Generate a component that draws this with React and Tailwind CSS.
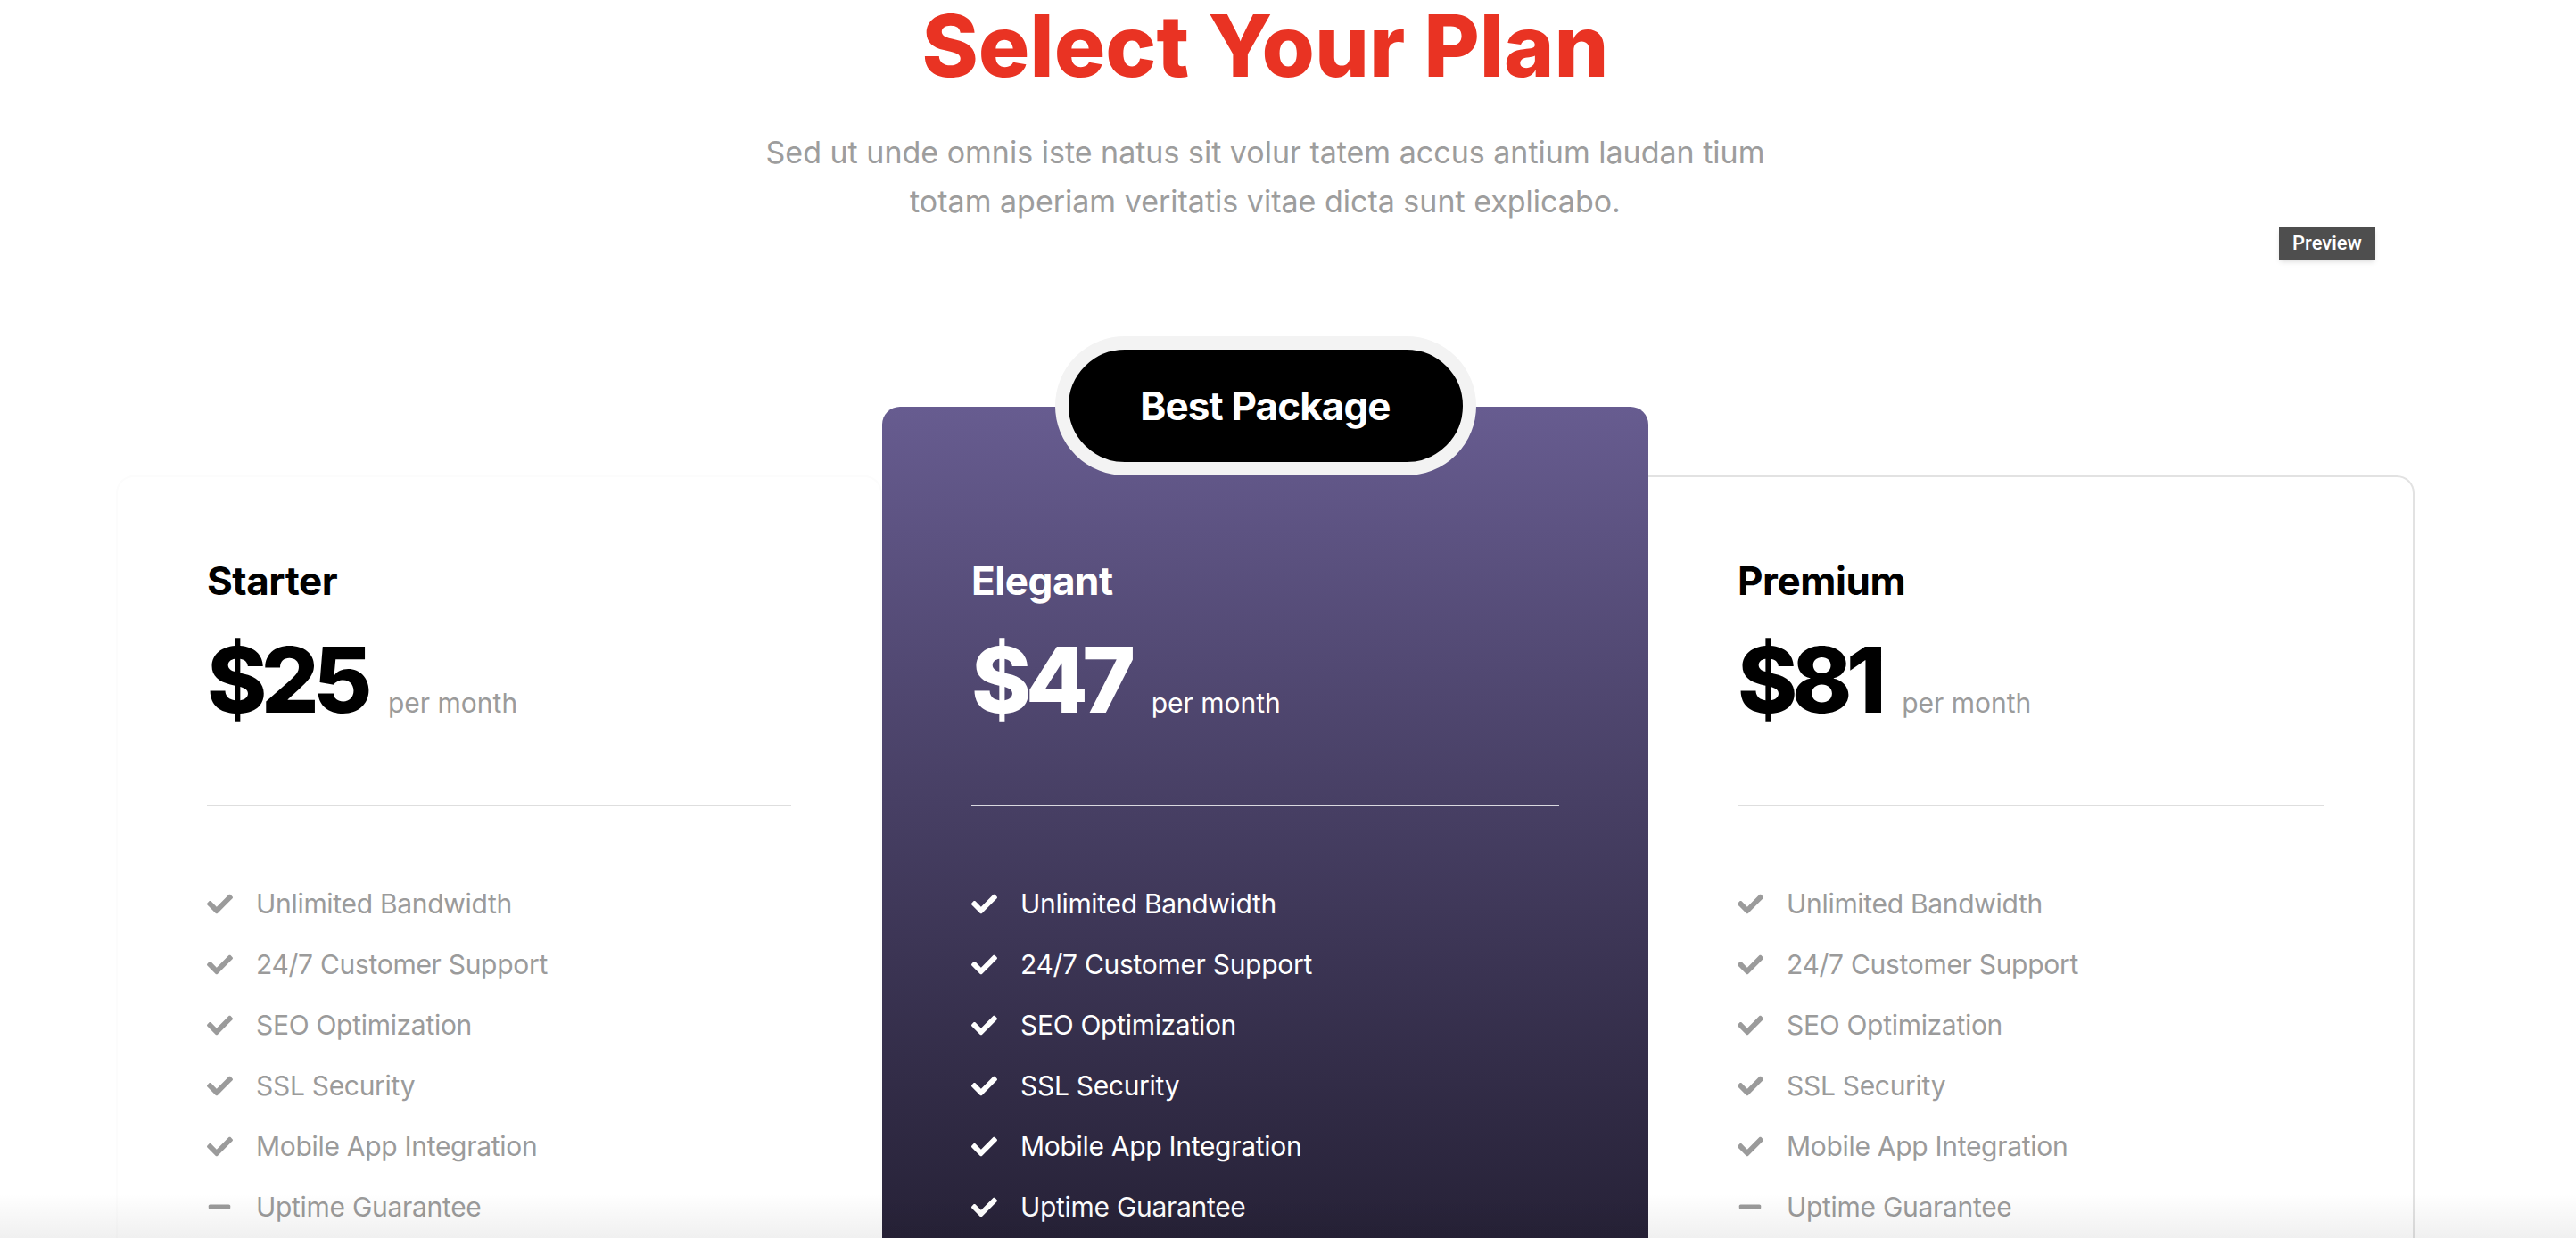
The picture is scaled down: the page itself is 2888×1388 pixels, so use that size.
import React from 'react';
import { FaCheck, FaMinus } from 'react-icons/fa';

const features = [
  'Unlimited Bandwidth',
  '24/7 Customer Support',
  'SEO Optimization',
  'SSL Security',
  'Mobile App Integration',
  'Uptime Guarantee',
];

const plans = [
  { name: 'Starter', price: '$25', uptime: false },
  { name: 'Elegant', price: '$47', uptime: true, featured: true },
  { name: 'Premium', price: '$81', uptime: false },
];

function PlanBody({ plan }) {
  const dark = plan.featured;
  return (
    <div className="flex flex-col">
      <h3 className={`text-[44px] leading-[48px] font-bold tracking-[-0.01em] ${dark ? 'text-white' : 'text-black'}`}>
        {plan.name}
      </h3>
      <div className="flex items-baseline mt-[36px]">
        <span className={`text-[102px] leading-none font-extrabold tracking-[-0.065em] ${dark ? 'text-white' : 'text-black'}`}>
          {plan.price}
        </span>
        <span className={`ml-[24px] text-[30px] ${dark ? 'text-white' : 'text-[#9b9b9b]'}`}>per month</span>
      </div>
      <div className={`mt-[89px] h-[2px] w-full ${dark ? 'bg-white/80' : 'bg-[#dedede]'}`}></div>
      <ul className="mt-[75px] flex flex-col">
        {features.map((f, i) => {
          const on = i < 5 || plan.uptime;
          return (
            <li key={f} className={`flex items-center h-[68px] text-[30px] tracking-[-0.01em] ${dark ? 'text-white' : 'text-[#9b9b9b]'}`}>
              <span className="w-[55px] flex items-center">
                {on ? <FaCheck className="w-[29px] h-[29px]" /> : <FaMinus className="w-[28px] h-[28px]" />}
              </span>
              {f}
            </li>
          );
        })}
      </ul>
    </div>
  );
}

export default function App() {
  return (
    <div className="relative h-[1388px] w-full overflow-hidden bg-white font-['Inter',_'Liberation_Sans',_sans-serif]">
      <div className="w-[2837px] flex flex-col items-center">
        <h1 className="mt-[3px] text-[96px] leading-none font-extrabold tracking-normal text-[#e93323]">
          Select Your Plan
        </h1>
        <p className="mt-[44px] text-center text-[34px] leading-[55px] text-[#9d9d9d]">
          Sed ut unde omnis iste natus sit volur tatem accus antium laudan tium
          <br />
          totam aperiam veritatis vitae dicta sunt explicabo.
        </p>

        <div className="mt-[203px] flex items-start">
          <div className="mt-[77px] w-[859px] h-[1200px] rounded-[20px] border-2 border-[#fcfcfc] px-[100px] pt-[92px]">
            <PlanBody plan={plans[0]} />
          </div>

          <div className="relative w-[859px] h-[1277px] rounded-[20px] bg-gradient-to-b from-[#675c90] to-[#120f1b] px-[100px] pt-[171px]">
            <div className="absolute left-1/2 -translate-x-1/2 top-[-79px] w-[472px] h-[156px] rounded-full border-[15px] border-[#f3f3f3] bg-black flex items-center justify-center">
              <span className="text-white text-[44px] font-bold tracking-[-0.02em]">Best Package</span>
            </div>
            <PlanBody plan={plans[1]} />
          </div>

          <div className="mt-[77px] w-[859px] h-[1200px] rounded-[20px] border-2 border-l-0 border-[#e2e2e2] rounded-l-none px-[100px] pt-[92px]">
            <PlanBody plan={plans[2]} />
          </div>
        </div>
      </div>

      <div className="absolute left-[2555px] top-[254px] w-[108px] h-[37px] bg-[#4e4e4e] shadow-md flex items-center justify-center">
        <span className="text-white text-[22px] font-medium font-['Roboto',_sans-serif]">Preview</span>
      </div>

      <div className="pointer-events-none absolute left-0 right-0 bottom-0 h-[50px] bg-gradient-to-b from-transparent to-black/[0.06]"></div>
    </div>
  );
}
